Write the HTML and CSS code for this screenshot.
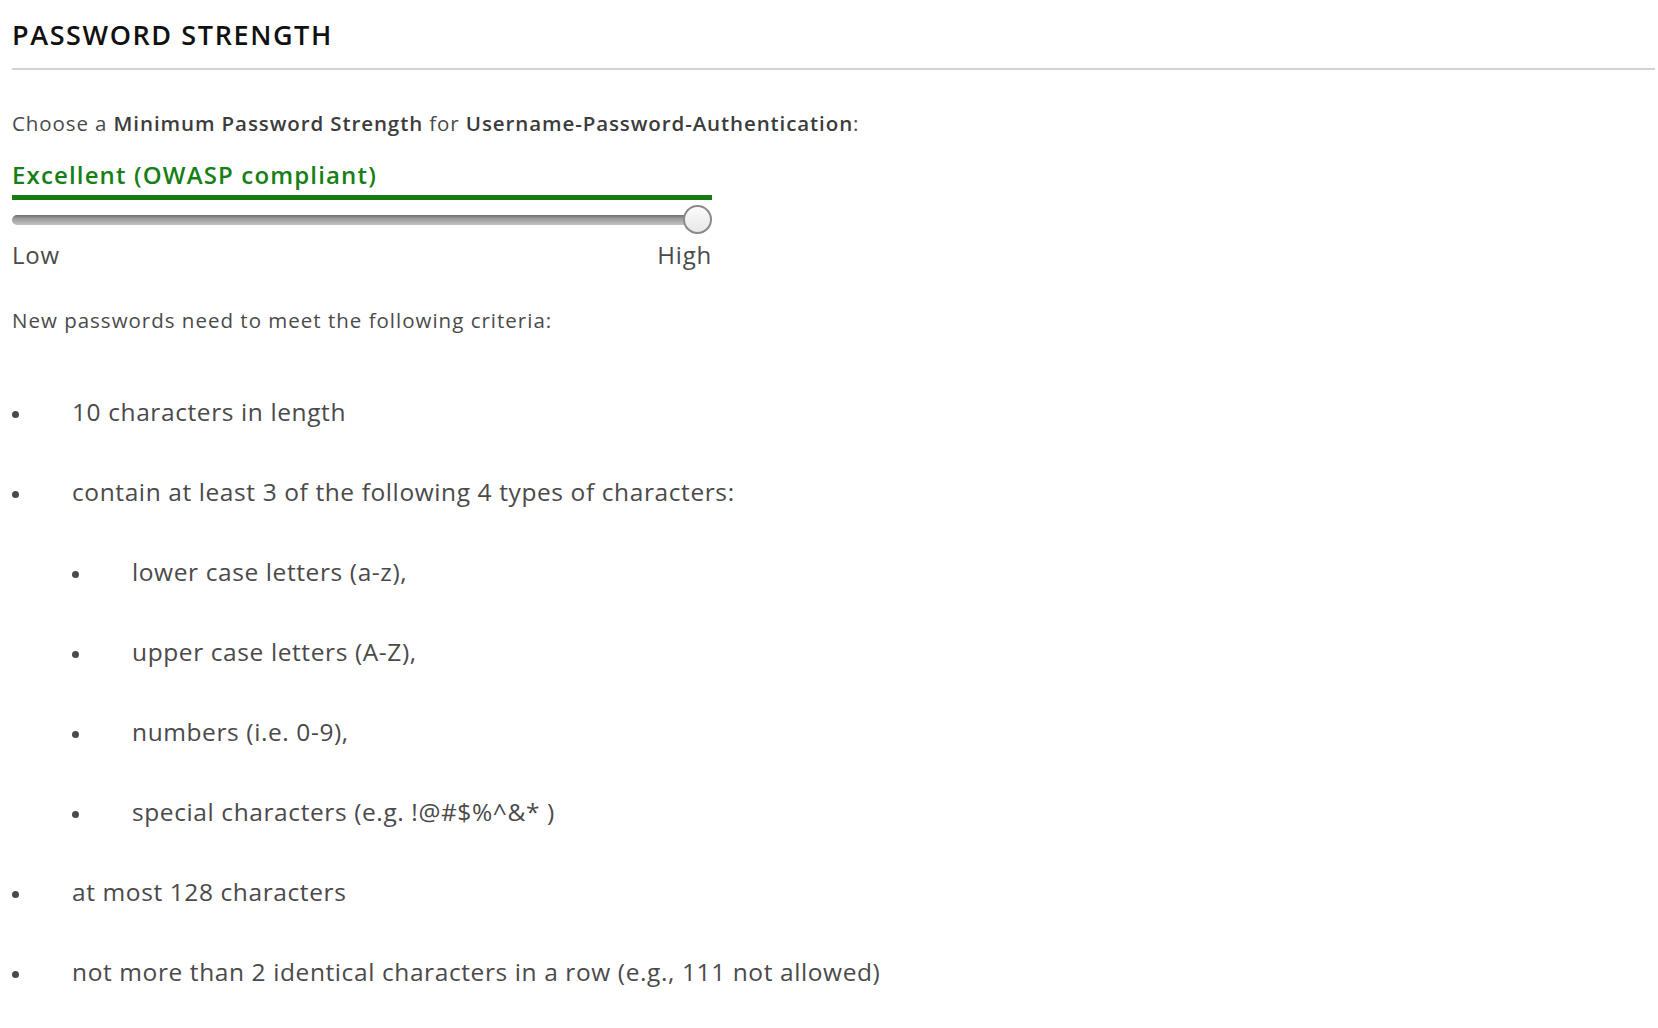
FILE: index.html
```html
<!DOCTYPE html>
<html lang="en">
<head>
<meta charset="utf-8">
<title>Password Strength</title>
<link rel="stylesheet" href="styles.css">
</head>
<body>
<div class="page">
  <h2 class="title">PASSWORD STRENGTH</h2>
  <p class="intro">Choose a <b>Minimum Password Strength</b> for <b>Username-Password-Authentication</b>:</p>
  <div class="strength">
    <div class="level">Excellent (OWASP compliant)</div>
    <div class="level-bar"></div>
    <div class="slider">
      <div class="track"></div>
      <div class="thumb"></div>
    </div>
    <div class="ends"><span>Low</span><span>High</span></div>
  </div>
  <p class="criteria">New passwords need to meet the following criteria:</p>
  <ul class="list">
    <li>10 characters in length</li>
    <li>contain at least 3 of the following 4 types of characters:
      <ul class="list sub">
        <li>lower case letters (a-z),</li>
        <li>upper case letters (A-Z),</li>
        <li>numbers (i.e. 0-9),</li>
        <li>special characters (e.g. !@#$%^&amp;* )</li>
      </ul>
    </li>
    <li>at most 128 characters</li>
    <li>not more than 2 identical characters in a row (e.g., 111 not allowed)</li>
  </ul>
</div>
</body>
</html>
```

FILE: styles.css
```css
html, body {
  margin: 0;
  padding: 0;
  background: #ffffff;
}
body {
  font-family: "Open Sans", "Lato", "Liberation Sans", sans-serif;
  color: #4a4a4a;
}
.page {
  padding: 0 3px 0 12px;
}
.title {
  margin: 0;
  padding-top: 21px;
  padding-bottom: 19px;
  font-size: 27px;
  line-height: 28px;
  font-weight: 600;
  letter-spacing: 1.6px;
  color: #111111;
  border-bottom: 2px solid #d3d3d3;
}
.intro {
  margin: 0;
  padding-top: 40px;
  font-size: 20.5px;
  line-height: 26px;
  letter-spacing: 0.9px;
  color: #4a4a4a;
}
.intro b {
  font-weight: 600;
  color: #3c3c3c;
}
.strength {
  width: 700px;
  margin-top: 25px;
}
.level {
  font-size: 24px;
  line-height: 28px;
  font-weight: 600;
  letter-spacing: 1.15px;
  color: #168016;
}
.level-bar {
  height: 5px;
  background: #137d13;
  margin-top: 6px;
}
.slider {
  position: relative;
  height: 29px;
  margin-top: 5px;
  display: flex;
  align-items: center;
}
.track {
  flex: 1;
  height: 10px;
  border-radius: 5px;
  background: linear-gradient(#6f6f6f 0%, #9a9a9a 35%, #c2c2c2 100%);
  margin-right: 14px;
}
.thumb {
  position: absolute;
  right: 0;
  top: 0;
  width: 25px;
  height: 25px;
  border-radius: 50%;
  border: 2px solid #8a8a8a;
  background: linear-gradient(#fbfbfb, #e8e8e8);
}
.ends {
  display: flex;
  justify-content: space-between;
  font-size: 24px;
  line-height: 30px;
  letter-spacing: 0.8px;
  margin-top: 6px;
  color: #4a4a4a;
}
.criteria {
  margin: 0;
  padding-top: 37px;
  font-size: 20.5px;
  line-height: 26px;
  letter-spacing: 1px;
}
.list {
  list-style: none;
  margin: 39px 0 0 0;
  padding: 0;
  font-size: 24.5px;
  line-height: 80px;
  letter-spacing: 0.6px;
}
.list.sub {
  margin: 0;
  padding-left: 60px;
}
.list li::before {
  content: "";
  display: inline-block;
  width: 7px;
  height: 7px;
  border-radius: 50%;
  background: #4a4a4a;
  vertical-align: middle;
  margin-right: 53px;
}
```
